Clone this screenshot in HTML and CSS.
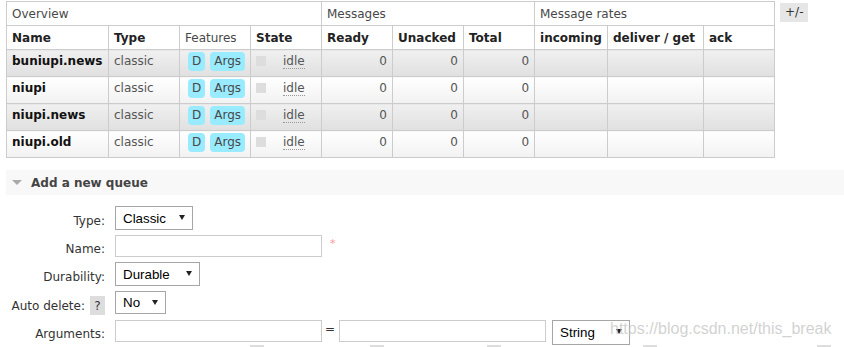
FILE: index.html
```html
<!DOCTYPE html>
<html lang="en">
<head>
  <meta charset="UTF-8" />
  <title>Queues</title>
  <link rel="stylesheet" href="styles.css">
</head>
<body>
  <div class="page">
    <div class="queues">
      <table class="list">
        <colgroup>
          <col class="c-name"><col class="c-std"><col class="c-std"><col class="c-std">
          <col class="c-std"><col class="c-std"><col class="c-std">
          <col class="c-in"><col class="c-get"><col class="c-std">
        </colgroup>
        <thead>
          <tr class="groups">
            <th colspan="4">Overview</th>
            <th colspan="3">Messages</th>
            <th colspan="3">Message rates</th>
          </tr>
          <tr class="cols">
            <th>Name</th>
            <th>Type</th>
            <th class="plain">Features</th>
            <th>State</th>
            <th>Ready</th>
            <th>Unacked</th>
            <th>Total</th>
            <th>incoming</th>
            <th>deliver / get</th>
            <th>ack</th>
          </tr>
        </thead>
        <tbody>
          <tr class="alt1">
            <td class="name">buniupi.news</td>
            <td>classic</td>
            <td class="features"><span class="tag">D</span><span class="tag">Args</span></td>
            <td><span class="dot"></span><abbr class="state">idle</abbr></td>
            <td class="num">0</td><td class="num">0</td><td class="num">0</td>
            <td></td><td></td><td></td>
          </tr>
          <tr class="alt2">
            <td class="name">niupi</td>
            <td>classic</td>
            <td class="features"><span class="tag">D</span><span class="tag">Args</span></td>
            <td><span class="dot"></span><abbr class="state">idle</abbr></td>
            <td class="num">0</td><td class="num">0</td><td class="num">0</td>
            <td></td><td></td><td></td>
          </tr>
          <tr class="alt1">
            <td class="name">niupi.news</td>
            <td>classic</td>
            <td class="features"><span class="tag">D</span><span class="tag">Args</span></td>
            <td><span class="dot"></span><abbr class="state">idle</abbr></td>
            <td class="num">0</td><td class="num">0</td><td class="num">0</td>
            <td></td><td></td><td></td>
          </tr>
          <tr class="alt2">
            <td class="name">niupi.old</td>
            <td>classic</td>
            <td class="features"><span class="tag">D</span><span class="tag">Args</span></td>
            <td><span class="dot"></span><abbr class="state">idle</abbr></td>
            <td class="num">0</td><td class="num">0</td><td class="num">0</td>
            <td></td><td></td><td></td>
          </tr>
        </tbody>
      </table>
      <span class="toggle">+/-</span>
    </div>

    <div class="section-head"><span class="arrow-down"></span>Add a new queue</div>

    <form class="add-form">
      <label class="lbl">Type:</label>
      <div class="field">
        <span class="select-wrap w-type">
          <select><option>Classic</option><option>Quorum</option></select>
          <span class="caret"></span>
        </span>
      </div>

      <label class="lbl short">Name:</label>
      <div class="field">
        <input type="text" class="text-in w-long" />
        <span class="req">*</span>
      </div>

      <label class="lbl">Durability:</label>
      <div class="field">
        <span class="select-wrap w-dur">
          <select><option>Durable</option><option>Transient</option></select>
          <span class="caret"></span>
        </span>
      </div>

      <label class="lbl">Auto delete: <span class="help">?</span></label>
      <div class="field">
        <span class="select-wrap w-no">
          <select><option>No</option><option>Yes</option></select>
          <span class="caret"></span>
        </span>
      </div>

      <label class="lbl short">Arguments:</label>
      <div class="field args">
        <div class="args-row">
          <input type="text" class="text-in w-long" />
          <span class="eq">=</span>
          <input type="text" class="text-in w-val" />
          <span class="select-wrap w-str">
            <select><option>String</option><option>Number</option><option>Boolean</option></select>
            <span class="caret"></span>
          </span>
        </div>
        <div class="add-row">
          <span class="opt">Add Message TTL <span class="help">?</span></span>
          <span class="opt">| Auto expire <span class="help">?</span></span>
          <span class="opt">| Max length <span class="help">?</span></span>
          <span class="opt">| Max length bytes <span class="help">?</span></span>
          <span class="opt">| Overflow behaviour <span class="help">?</span></span>
        </div>
      </div>
    </form>

    <div class="watermark">https://blog.csdn.net/this_break</div>
  </div>
</body>
</html>
```

FILE: styles.css
```css
body {
  margin: 0;
  font-family: "DejaVu Sans", Verdana, sans-serif;
  font-size: 12px;
  color: #484848;
  background: #fff;
  overflow: hidden;
}
.page {
  position: relative;
  padding: 1px 0 0 6px;
}
.queues {
  display: flex;
  align-items: flex-start;
  gap: 5px;
}
table.list {
  border-collapse: collapse;
  table-layout: fixed;
  width: 769px;
}
.c-name { width: 102px; }
.c-std { width: 71px; }
.c-in { width: 73px; }
.c-get { width: 96px; }
table.list th,
table.list td {
  border: 1px solid #ccc;
  padding: 0 5px;
  text-align: left;
  white-space: nowrap;
  overflow: hidden;
}
.groups th {
  height: 23px;
  font-weight: normal;
  color: #484848;
}
.cols th {
  height: 23px;
  font-weight: bold;
  color: #222;
}
.cols th.plain {
  font-weight: normal;
  color: #484848;
}
table.list tbody td {
  height: 27px;
  box-sizing: border-box;
  vertical-align: top;
  padding-top: 4px;
  color: #555;
}
tr.alt1 td {
  background: linear-gradient(#f0f0f0, #e0e0e0);
}
tr.alt2 td {
  background: linear-gradient(#ffffff, #f2f2f2);
}
table.list td.name {
  font-weight: bold;
  color: #111;
}
table.list td.num {
  text-align: right;
}
table.list td.features {
  padding-top: 2px;
  padding-left: 8px;
}
.tag {
  display: inline-block;
  background: #99ebff;
  color: #484848;
  border-radius: 4px;
  padding: 2px 4px 3px;
  margin-right: 5px;
  line-height: 14px;
}
.dot {
  display: inline-block;
  width: 10px;
  height: 10px;
  background: #ddd;
  margin: 2px 17px 0 0;
  vertical-align: top;
}
abbr.state {
  text-decoration: none;
  border-bottom: 1px dotted #999;
}
.toggle {
  background: #e6e6e6;
  color: #333;
  padding: 2px 5px 3px;
  margin-top: 2px;
  line-height: 14px;
}

.section-head {
  margin-top: 12px;
  height: 25px;
  background: #f8f8f8;
  display: flex;
  align-items: center;
  gap: 9px;
  padding-left: 6px;
  font-weight: bold;
  color: #444;
}
.arrow-down {
  width: 0;
  height: 0;
  border-left: 5px solid transparent;
  border-right: 5px solid transparent;
  border-top: 5px solid #aaa;
}

.add-form {
  display: grid;
  grid-template-columns: 99px auto;
  column-gap: 10px;
  row-gap: 5px;
  margin-top: 11px;
}
.lbl {
  display: flex;
  align-self: start;
  align-items: center;
  justify-content: flex-end;
  gap: 5px;
  height: 24px;
  padding-top: 5px;
  box-sizing: border-box;
  color: #333;
  white-space: nowrap;
}
.lbl.short {
  height: 22px;
}
.field {
  display: flex;
  align-items: center;
  align-self: start;
}
.select-wrap {
  position: relative;
  display: block;
}
.select-wrap select {
  display: block;
  appearance: none;
  -webkit-appearance: none;
  width: 100%;
  height: 24px;
  margin: 0;
  border: 1px solid #a6a6a6;
  border-radius: 0;
  background: #fff;
  padding: 0 0 0 7px;
  font-family: "Liberation Sans", Arial, sans-serif;
  font-size: 13.33px;
  color: #000;
}
.caret {
  position: absolute;
  right: 8px;
  top: 9px;
  width: 0;
  height: 0;
  border-left: 3px solid transparent;
  border-right: 3px solid transparent;
  border-top: 5px solid #222;
  pointer-events: none;
}
.w-type { width: 78px; }
.w-dur { width: 85px; }
.w-no { width: 51px; }
.w-no select { height: 23px; }
.w-str { width: 78px; }
.w-str select { height: 25px; }
.text-in {
  display: block;
  box-sizing: border-box;
  height: 22px;
  border: 1px solid #ccc;
  padding: 0 4px;
  margin: 0;
  font-family: "DejaVu Sans", Verdana, sans-serif;
  font-size: 12px;
}
.w-long { width: 207px; }
.w-val { width: 207px; }
.req {
  color: #f99;
  margin-left: 8px;
  align-self: flex-start;
  margin-top: 2px;
  font-size: 11px;
}
.help {
  display: inline-flex;
  align-items: center;
  justify-content: center;
  width: 15px;
  height: 19px;
  background: #ddd;
  color: #333;
  font-weight: normal;
}
.args {
  flex-direction: column;
  align-items: flex-start;
}
.args-row {
  display: flex;
  align-items: flex-start;
}
.eq {
  color: #333;
  margin: 2px 4px 0 3px;
}
.args-row .select-wrap {
  margin-left: 6px;
}
.add-row {
  display: grid;
  grid-template-columns: 149px 120px 117px 156px 174px;
  margin-top: 0;
  white-space: nowrap;
}
.opt {
  display: flex;
  justify-content: flex-end;
  align-items: flex-end;
  gap: 4px;
  color: #333;
  line-height: 14px;
}
.opt .help {
  width: 14px;
  align-items: flex-end;
}
.watermark {
  position: absolute;
  left: 610px;
  top: 320px;
  font-family: "Liberation Sans", Arial, sans-serif;
  font-size: 16px;
  color: rgba(190, 190, 190, 0.7);
  pointer-events: none;
}
```
